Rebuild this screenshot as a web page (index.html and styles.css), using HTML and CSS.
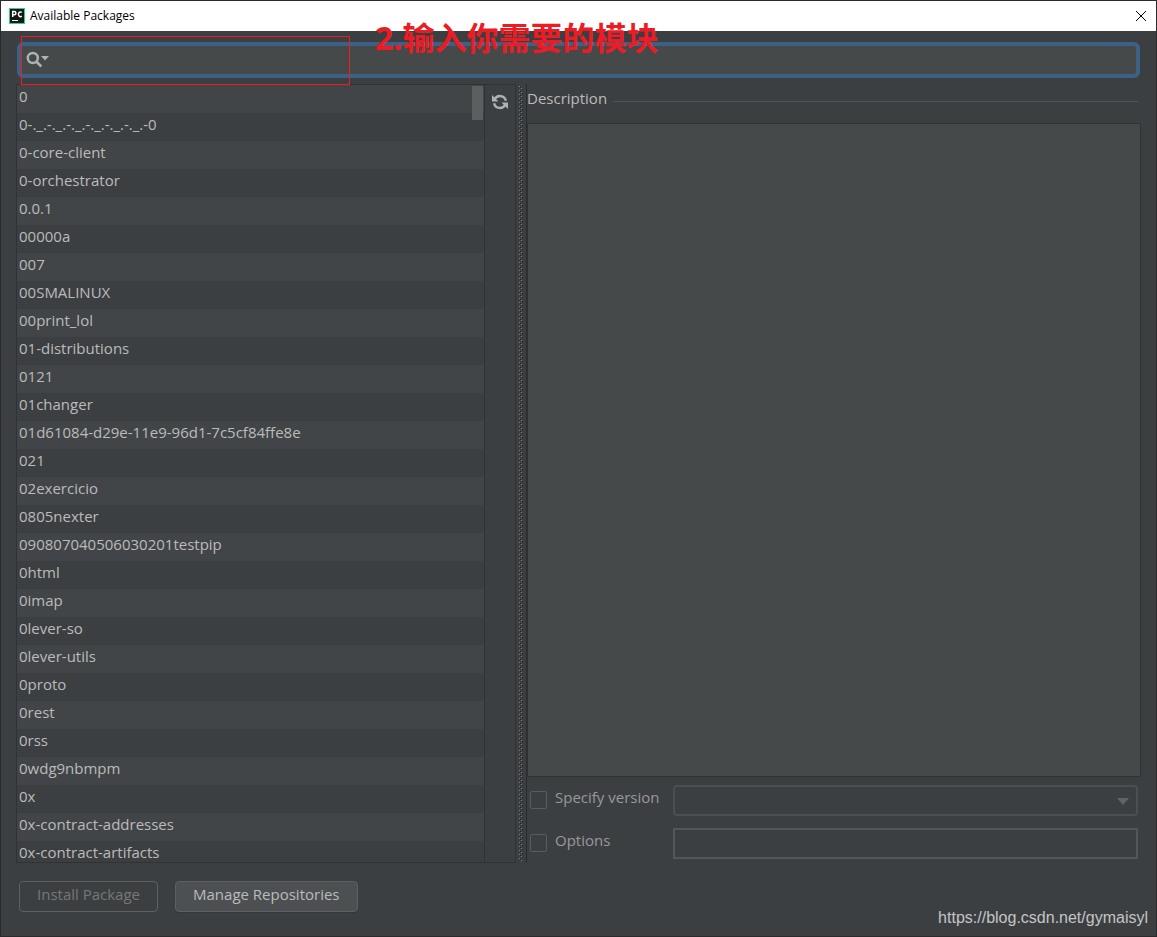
FILE: index.html
```html
<!DOCTYPE html>
<html lang="en">
<head>
<meta charset="utf-8">
<title>Available Packages</title>
<link rel="stylesheet" href="styles.css">
</head>
<body>
<div class="window">
  <header class="titlebar">
    <svg class="app-icon" width="16" height="16" viewBox="0 0 16 16" aria-hidden="true">
      <rect width="16" height="16" fill="#21d789"/>
      <rect x="1" y="1" width="14" height="14" fill="#161616"/>
      <path d="M3.700 9V3.600h1.600a1.500 1.500 0 0 1 0 3.200H3.700M12.800 4.400a2.200 2.300 0 1 0 0 3.800" fill="none" stroke="#fff" stroke-width="1.500"/>
      <rect x="3" y="12" width="6" height="1" fill="#fff"/>
    </svg>
    <h1 class="title">Available Packages</h1>
    <button class="close" type="button" aria-label="Close">
      <svg width="12" height="12" viewBox="0 0 12 12"><path d="M1 1l10 10M11 1L1 11" stroke="#000" stroke-width="1" fill="none"/></svg>
    </button>
  </header>

  <div class="search">
    <svg class="search-icon" width="24" height="18" viewBox="0 0 24 18" aria-hidden="true">
      <circle cx="6.8" cy="7" r="5" fill="none" stroke="#afb1b3" stroke-width="2.5"/>
      <path d="M10.300 10.500l5 5" stroke="#afb1b3" stroke-width="2.600"/>
      <path d="M15 5h8l-4 4.500z" fill="#afb1b3"/>
    </svg>
    <input class="search-input" type="text" aria-label="Search packages">
  </div>

  <main class="content">
    <section class="packages">
      <div class="list-wrap">
        <ul class="list">
          <li>0</li>
          <li>0-._.-._.-._.-._.-._.-._.-0</li>
          <li>0-core-client</li>
          <li>0-orchestrator</li>
          <li>0.0.1</li>
          <li>00000a</li>
          <li>007</li>
          <li>00SMALINUX</li>
          <li>00print_lol</li>
          <li>01-distributions</li>
          <li>0121</li>
          <li>01changer</li>
          <li>01d61084-d29e-11e9-96d1-7c5cf84ffe8e</li>
          <li>021</li>
          <li>02exercicio</li>
          <li>0805nexter</li>
          <li>090807040506030201testpip</li>
          <li>0html</li>
          <li>0imap</li>
          <li>0lever-so</li>
          <li>0lever-utils</li>
          <li>0proto</li>
          <li>0rest</li>
          <li>0rss</li>
          <li>0wdg9nbmpm</li>
          <li>0x</li>
          <li>0x-contract-addresses</li>
          <li>0x-contract-artifacts</li>
        </ul>
        <div class="scroll-thumb"></div>
      </div>
      <div class="tools">
        <button class="refresh" type="button" aria-label="Reload list of packages">
          <svg width="16" height="16" viewBox="0 0 16 16">
            <path d="M2.600 5.500A6 6 0 0 1 13.900 6.800M13.400 10.500A6 6 0 0 1 2.100 9.200" fill="none" stroke="#afb1b3" stroke-width="2.400"/>
            <path d="M0 1v6.500h6.500zM16 15V8.500H9.500z" fill="#afb1b3"/>
          </svg>
        </button>
      </div>
    </section>

    <div class="splitter">
      <svg width="4" height="100%" aria-hidden="true">
        <defs>
          <pattern id="grip" width="4" height="4" patternUnits="userSpaceOnUse">
            <rect width="1" height="1" fill="#808385"/>
            <rect x="1" y="1" width="1" height="1" fill="#25272a"/>
            <rect x="2" y="2" width="1" height="1" fill="#808385"/>
            <rect x="3" y="3" width="1" height="1" fill="#25272a"/>
          </pattern>
        </defs>
        <rect width="4" height="100%" fill="url(#grip)"/>
      </svg>
    </div>

    <section class="details">
      <h2 class="heading">Description</h2>
      <div class="description"></div>
      <div class="options">
        <label class="check"><input type="checkbox" disabled><span>Specify version</span></label>
        <div class="combo">
          <select class="field rounded" aria-label="Version" disabled><option></option></select>
          <svg class="combo-arrow" width="12" height="7" viewBox="0 0 12 7" aria-hidden="true"><path d="M0 0h12L6 7z" fill="#616365"/></svg>
        </div>
        <label class="check"><input type="checkbox" disabled><span>Options</span></label>
        <input class="field" type="text" aria-label="Options value" disabled>
      </div>
    </section>
  </main>

  <footer class="footer">
    <button class="button" type="button" disabled>Install Package</button>
    <button class="button" type="button">Manage Repositories</button>
  </footer>

  <div class="highlight"></div>
  <p class="note">2.输入你需要的模块</p>
  <a class="watermark" href="https://blog.csdn.net/gymaisyl">https://blog.csdn.net/gymaisyl</a>
</div>
</body>
</html>
```

FILE: styles.css
```css
* {
  box-sizing: border-box;
}

body {
  margin: 0;
  background: #2b2b2b;
  color: #bbbbbb;
  font: 15px/20px "Open Sans", "Noto Sans", sans-serif;
}

button,
input,
select {
  margin: 0;
  padding: 0;
  font: inherit;
  color: inherit;
}

.window {
  position: relative;
  display: flex;
  flex-direction: column;
  height: 100vh;
  border: 1px solid #2b2b2b;
  background: #3c3f41;
}

.titlebar {
  display: flex;
  align-items: center;
  gap: 5px;
  flex: none;
  height: 30px;
  padding: 0 9px 0 8px;
  background: #ffffff;
  color: #000000;
}

.title {
  flex: 1;
  margin: 0;
  font: 12px/16px "Open Sans", "Noto Sans", sans-serif;
}

.close {
  display: flex;
  border: 0;
  background: none;
}

.search {
  display: flex;
  align-items: center;
  gap: 4px;
  flex: none;
  height: 36px;
  margin: 11px 16px 0;
  padding: 0 5px;
  border: 4px solid #3d6185;
  border-radius: 6px;
  background: #45494a;
}

.search-input {
  flex: 1;
  min-width: 0;
  border: 0;
  outline: 0;
  background: none;
}

.content {
  display: flex;
  flex: 1;
  min-height: 0;
  margin: 6px 15px 0;
}

.packages {
  display: flex;
  flex: 0 0 500px;
  border: 1px solid #323232;
}

.list-wrap {
  position: relative;
  flex: 1;
  overflow: hidden;
}

.list {
  margin: 0;
  padding: 0;
  list-style: none;
}

.list li {
  height: 28px;
  padding: 1px 2px;
}

.list li:nth-child(odd) {
  background: #414547;
}

.scroll-thumb {
  position: absolute;
  top: 1px;
  right: 1px;
  width: 11px;
  height: 34px;
  background: #5c5f60;
}

.tools {
  flex: 0 0 31px;
  padding-top: 9px;
  border-left: 1px solid #323232;
}

.refresh {
  display: flex;
  margin: 0 auto;
  border: 0;
  background: none;
}

.splitter {
  display: flex;
  flex: 0 0 10px;
  padding: 2px 3px;
  border-right: 1px solid #2b2b2b;
}

.details {
  display: flex;
  flex: 1;
  flex-direction: column;
  min-width: 0;
}

.heading {
  display: flex;
  align-items: center;
  gap: 6px;
  margin: 4px 3px 15px 0;
  font-size: 15px;
  font-weight: 400;
  line-height: 20px;
}

.heading::after {
  content: "";
  flex: 1;
  height: 1px;
  margin-top: 6px;
  background: #515456;
}

.description {
  flex: 1;
  border: 1px solid #323232;
  background: #45494a;
}

.options {
  display: grid;
  grid-template-columns: 143px 1fr;
  row-gap: 12px;
  padding: 8px 3px 4px;
}

.check {
  display: flex;
  gap: 8px;
  padding-top: 2px;
  color: #999999;
}

.check input {
  appearance: none;
  width: 17px;
  height: 18px;
  margin-top: 4px;
  border: 1px solid #5a5c5d;
  border-radius: 2px;
}

.combo {
  position: relative;
}

.combo-arrow {
  position: absolute;
  top: 13px;
  right: 9px;
}

.field {
  display: block;
  appearance: none;
  width: 100%;
  height: 31px;
  border: 2px solid #535557;
  background: #3c3f41;
}

.rounded {
  border-radius: 4px;
}

.footer {
  display: flex;
  gap: 17px;
  flex: none;
  padding: 18px 18px 24px;
}

.button {
  height: 31px;
  padding: 0 17px 5px;
  border: 1px solid #5e6060;
  border-radius: 4px;
  background: #4c5052;
  box-shadow: 0 1px 1px #353739;
}

.button:disabled {
  background: none;
  box-shadow: none;
  color: #777777;
}

.highlight {
  position: absolute;
  top: 35px;
  left: 20px;
  width: 329px;
  height: 49px;
  border: 1px solid #ed1c24;
}

.note {
  position: absolute;
  top: 17px;
  left: 374px;
  margin: 0;
  color: #ed1c24;
  font: bold 32px/40px "Open Sans", "Noto Sans CJK SC", sans-serif;
  white-space: nowrap;
}

.watermark {
  position: absolute;
  right: 8px;
  bottom: 8px;
  color: #c4c5c6;
  font: 16px/20px "Liberation Sans", Arial, sans-serif;
  text-decoration: none;
}
```
